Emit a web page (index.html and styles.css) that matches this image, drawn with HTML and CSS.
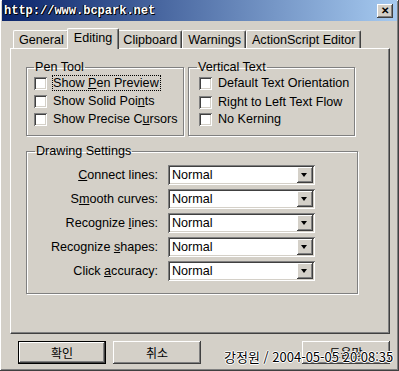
FILE: index.html
```html
<!DOCTYPE html>
<html lang="ko">
  <head>
    <meta charset="UTF-8" />
    <title>Preferences</title>
    <link rel="stylesheet" href="styles.css">
  </head>
  <body>
    <div class="window">
      <div class="titlebar">
        <span class="title">http://www.bcpark.net</span>
        <span class="close">&#x2715;</span>
      </div>

      <div class="content">
        <ul class="tabs">
          <li class="tab">General</li>
          <li class="tab tab-active">Editing</li>
          <li class="tab">Clipboard</li>
          <li class="tab">Warnings</li>
          <li class="tab">ActionScript Editor</li>
        </ul>

        <div class="panel">
          <div class="top-groups">
            <fieldset class="group group-pen">
              <legend>Pen Tool</legend>
              <label class="check"><span class="box"></span><span class="focus">Show <u>P</u>en Preview</span></label>
              <label class="check"><span class="box"></span><span>Show Solid Poi<u>n</u>ts</span></label>
              <label class="check"><span class="box"></span><span>Show Precise C<u>u</u>rsors</span></label>
            </fieldset>
            <fieldset class="group group-vertical">
              <legend>Vertical Text</legend>
              <label class="check"><span class="box"></span><span>Default Text Orientation</span></label>
              <label class="check"><span class="box"></span><span>Right to Left Text Flow</span></label>
              <label class="check"><span class="box"></span><span>No Kerning</span></label>
            </fieldset>
          </div>

          <fieldset class="group group-drawing">
            <legend>Drawing Settings</legend>
            <div class="settings">
              <span class="setting-label"><u>C</u>onnect lines:</span>
              <div class="select"><span>Normal</span><span class="arrow"></span></div>
              <span class="setting-label">S<u>m</u>ooth curves:</span>
              <div class="select"><span>Normal</span><span class="arrow"></span></div>
              <span class="setting-label">Recognize <u>l</u>ines:</span>
              <div class="select"><span>Normal</span><span class="arrow"></span></div>
              <span class="setting-label">Recognize <u>s</u>hapes:</span>
              <div class="select"><span>Normal</span><span class="arrow"></span></div>
              <span class="setting-label">Click <u>a</u>ccuracy:</span>
              <div class="select"><span>Normal</span><span class="arrow"></span></div>
            </div>
          </fieldset>
        </div>

        <div class="buttons">
          <button class="btn btn-default">확인</button>
          <button class="btn">취소</button>
          <button class="btn btn-help">도움말</button>
        </div>
      </div>

      <div class="stamp">강정원 / 2004-05-05 20:08:35</div>
    </div>
  </body>
</html>
```

FILE: styles.css
```css
* {
  box-sizing: border-box;
}

body {
  margin: 0;
  background: #d4d0c8;
}

.window {
  position: relative;
  width: 399px;
  height: 371px;
  background: #d4d0c8;
  font-family: "Liberation Sans", Arial, "Noto Sans CJK KR", sans-serif;
  font-size: 12.6px;
  color: #000;
  box-shadow: inset -1px -1px #404040, inset 1px 1px #fff, inset -2px -2px #808080;
  overflow: hidden;
}

/* title bar */
.titlebar {
  display: flex;
  align-items: center;
  justify-content: space-between;
  height: 21px;
  margin: 0 2px;
  padding: 0 4px 0 2px;
  background: linear-gradient(to right, #0a246a, #a6caf0);
}

.title {
  font-family: "Liberation Mono", "DejaVu Sans Mono", monospace;
  font-weight: bold;
  font-size: 12px;
  color: #fff;
  text-shadow: 1px 1px 0 #000, -1px 0 0 #000;
}

.close {
  display: flex;
  align-items: center;
  justify-content: center;
  width: 16px;
  height: 14px;
  background: #d4d0c8;
  font-size: 10px;
  font-weight: bold;
  box-shadow: inset -1px -1px #404040, inset 1px 1px #fff, inset -2px -2px #808080;
}

.content {
  padding: 7px 9px 0 10px;
}

/* tabs */
.tabs {
  display: flex;
  align-items: flex-end;
  list-style: none;
  margin: 0;
  padding: 0 0 0 3px;
  height: 20px;
}

.tab {
  height: 18px;
  padding: 1px 4px 0 5px;
  border: 1px solid #fff;
  border-bottom: none;
  border-right: 1px solid #404040;
  border-radius: 2px 2px 0 0;
  box-shadow: inset -1px 0 #808080;
  line-height: 16px;
  white-space: nowrap;
}

.tab-active {
  position: relative;
  z-index: 1;
  height: 21px;
  margin: 0 -2px -1px;
  padding: 1px 6px 0;
  background: #d4d0c8;
}

.panel {
  height: 286px;
  padding: 11px 0 0 15px;
  border: 1px solid #fff;
  border-right-color: #404040;
  border-bottom-color: #404040;
  box-shadow: inset -1px -1px #808080;
}

/* group boxes */
.top-groups {
  display: flex;
  gap: 4px;
}

.group {
  min-width: 0;
  margin: 0;
  padding: 0 0 0 7px;
  border: 1px solid #808080;
  box-shadow: inset 1px 1px #fff, 1px 1px #fff;
  overflow: hidden;
}

.group legend {
  padding: 0 1px;
  margin-left: 0;
  line-height: 14px;
}

.group-pen {
  width: 158px;
  height: 76px;
}

.group-vertical {
  width: 167px;
  height: 76px;
  padding-left: 10px;
}

.group-vertical legend {
  margin-left: -2px;
}

.check {
  display: flex;
  align-items: center;
  gap: 6px;
  height: 18px;
  white-space: nowrap;
}

.group-vertical .check:nth-of-type(2) {
  margin-top: 1px;
}

.group-vertical .check:nth-of-type(3) {
  margin-top: -1px;
}

.box {
  flex: none;
  width: 13px;
  height: 13px;
  background: #fff;
  box-shadow: inset 1px 1px #808080, inset -1px -1px #fff, inset 2px 2px #404040, inset -2px -2px #d4d0c8;
}

.focus {
  outline: 1px dotted #000;
  padding-right: 1px;
}

.group-drawing {
  width: 332px;
  height: 150px;
  margin-top: 8px;
  padding: 7px 0 0 0;
}

.group-drawing legend {
  margin-left: 8px;
}

.settings {
  display: grid;
  grid-template-columns: 131px 147px;
  column-gap: 10px;
  row-gap: 4px;
  align-items: center;
}

.setting-label {
  text-align: right;
  white-space: nowrap;
}

.select {
  display: flex;
  align-items: center;
  justify-content: space-between;
  height: 20px;
  padding: 2px 2px 2px 4px;
  background: #fff;
  box-shadow: inset 1px 1px #808080, inset -1px -1px #fff, inset 2px 2px #404040, inset -2px -2px #d4d0c8;
}

.arrow {
  position: relative;
  width: 16px;
  height: 16px;
  background: #d4d0c8;
  box-shadow: inset -1px -1px #404040, inset 1px 1px #fff, inset -2px -2px #808080;
}

.arrow::after {
  content: "";
  position: absolute;
  left: 4px;
  top: 6px;
  border-left: 3.5px solid transparent;
  border-right: 3.5px solid transparent;
  border-top: 4px solid #000;
}

/* bottom buttons */
.buttons {
  display: flex;
  gap: 7px;
  padding: 7px 0 0 8px;
}

.btn {
  width: 88px;
  height: 23px;
  padding: 0;
  border: none;
  background: #d4d0c8;
  font-family: "Noto Sans CJK KR", sans-serif;
  font-size: 12px;
  color: #000;
  box-shadow: inset -1px -1px #404040, inset 1px 1px #fff, inset -2px -2px #808080;
}

.btn-default {
  box-shadow: inset 0 0 0 1px #000, inset -2px -2px #404040, inset 2px 2px #fff, inset -3px -3px #808080;
}

.btn-help {
  margin-left: auto;
}

.stamp {
  position: absolute;
  left: 224px;
  top: 349px;
  font-family: "Noto Sans CJK KR", sans-serif;
  font-size: 13px;
  line-height: 15px;
  color: #000;
  text-shadow: 1px 0 #fff, -1px 0 #fff, 0 1px #fff, 0 -1px #fff;
}
```
